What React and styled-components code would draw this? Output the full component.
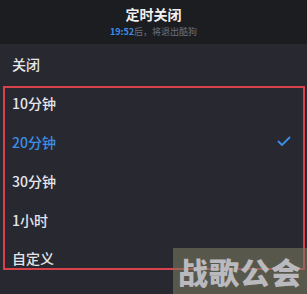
import React from 'react';
import styled, { createGlobalStyle } from 'styled-components';

const GlobalStyle = createGlobalStyle`
  html, body {
    margin: 0;
    padding: 0;
    background: #272830;
  }
  body {
    font-family: 'Noto Sans CJK SC', 'Noto Sans', sans-serif;
  }
`;

const options = [
  { label: '关闭' },
  { label: '10分钟' },
  { label: '20分钟', active: true },
  { label: '30分钟' },
  { label: '1小时' },
  { label: '自定义' },
];

export default function App() {
  return (
    <Screen>
      <GlobalStyle />
      <Header>
        <Title>定时关闭</Title>
        <Subtitle>
          <Time>19:52</Time>后，将退出酷狗
        </Subtitle>
      </Header>
      <List>
        {options.map((o) => (
          <Row key={o.label} $active={o.active}>
            {o.label}
            {o.active && (
              <svg width='14' height='11' viewBox='0 0 14 11'>
                <path d='M1.5 5.5 L5 9 L12.5 1.5' fill='none' stroke='#3d8ee6' strokeWidth='1.8' strokeLinecap='round' strokeLinejoin='round' />
              </svg>
            )}
          </Row>
        ))}
        <Highlight />
      </List>
      <Watermark>战歌公会</Watermark>
    </Screen>
  );
}

const Screen = styled.div`
  position: relative;
  width: 307px;
  height: 294px;
  overflow: hidden;
  background: #272830;
`;

const Header = styled.header`
  height: 44px;
  background: #1c1d21;
  display: flex;
  flex-direction: column;
  align-items: center;
  padding-top: 4px;
  box-sizing: border-box;
`;

const Title = styled.div`
  color: #f0f0f2;
  font-size: 14px;
  font-weight: 700;
  line-height: 20px;
`;

const Subtitle = styled.div`
  color: #6f717a;
  font-size: 9px;
  line-height: 14px;
  margin-top: 1px;
`;

const Time = styled.span`
  color: #3d8ee6;
  font-weight: 700;
`;

const List = styled.div`
  position: relative;
  padding-top: 1px;
`;

const Row = styled.div`
  height: 38.8px;
  display: flex;
  align-items: center;
  justify-content: space-between;
  padding: 0 16px 0 12px;
  font-size: 14px;
  font-weight: 500;
  color: ${(p) => (p.$active ? '#3d8ee6' : '#e6e6ea')};
`;

const Highlight = styled.div`
  position: absolute;
  left: 3px;
  right: 2px;
  top: 42px;
  height: 184px;
  border: 2.5px solid #d8434b;
  box-sizing: border-box;
  pointer-events: none;
`;

const Watermark = styled.div`
  position: absolute;
  left: 173px;
  top: 248px;
  width: 134px;
  height: 46px;
  background: rgba(120, 118, 95, 0.6);
  color: #b9b9be;
  font-size: 30px;
  font-weight: 900;
  line-height: 46px;
  text-align: center;
  letter-spacing: 1px;
`;
